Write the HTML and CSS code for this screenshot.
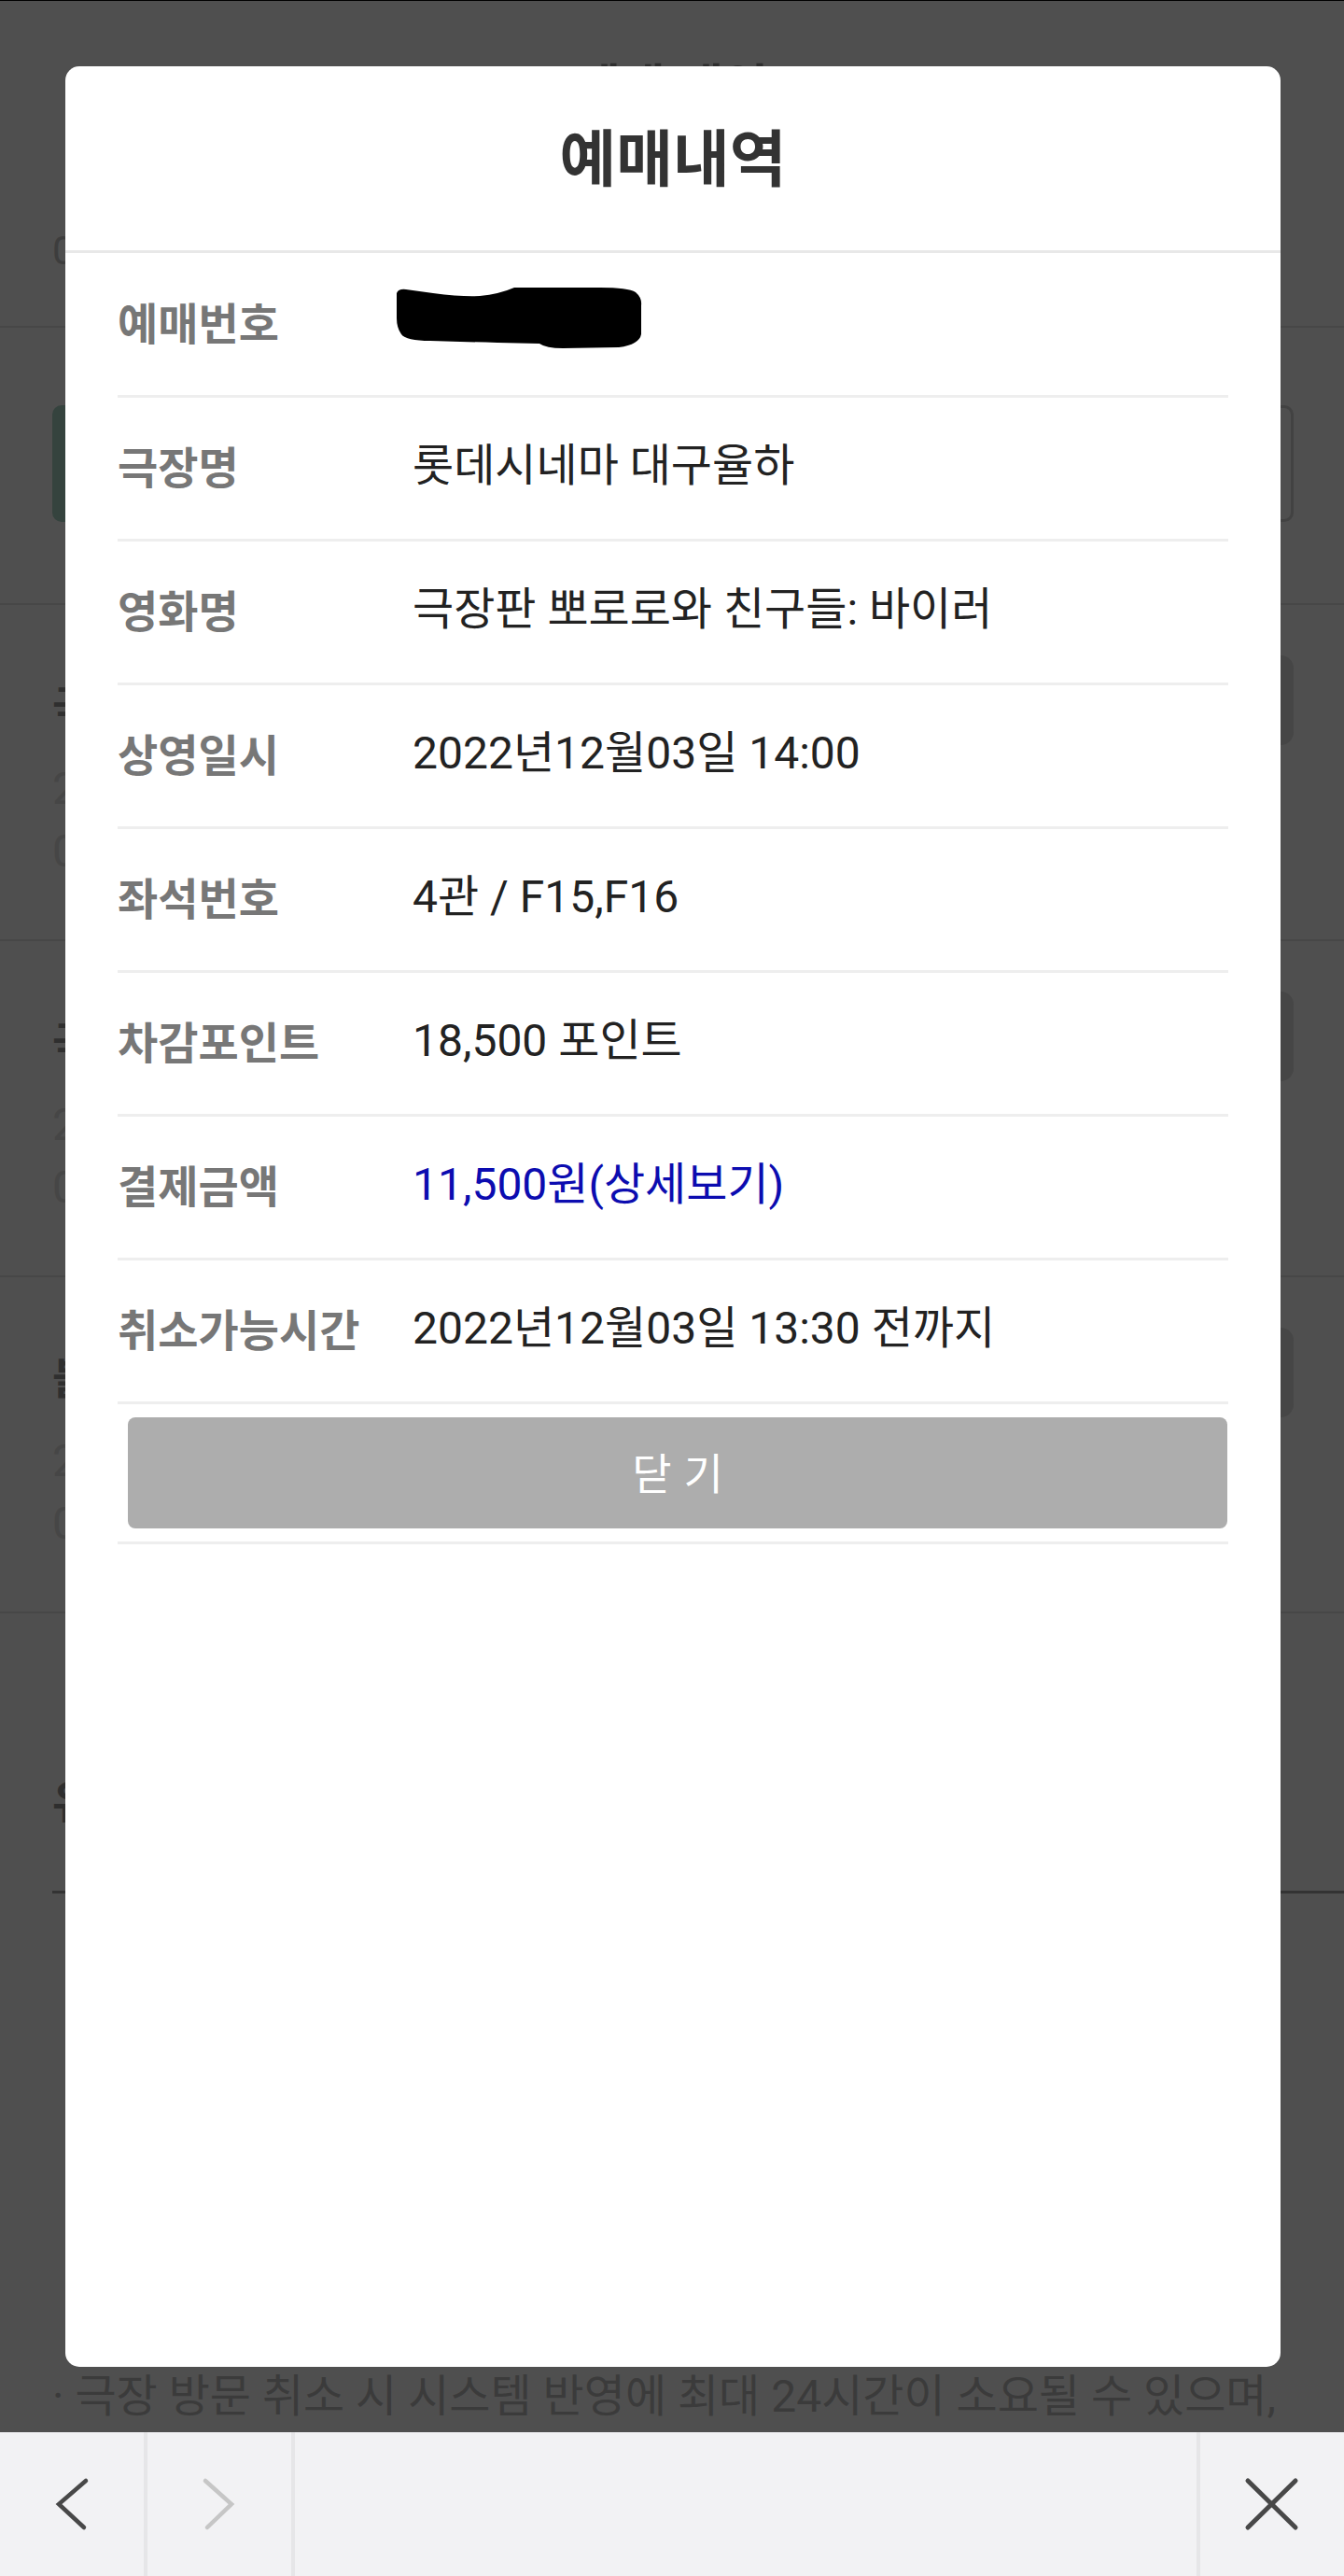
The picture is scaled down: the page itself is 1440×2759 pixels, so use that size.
FILE: index.html
```html
<!DOCTYPE html>
<html lang="ko">
<head>
<meta charset="utf-8">
<title>예매내역</title>
<link rel="stylesheet" href="styles.css">
</head>
<body>
<div class="screen">
  <div class="page">
    <div class="topline"></div>
    <div class="page-head">
      <div class="page-title">예매 내역</div>
      <div class="tabs">0</div>
    </div>
    <div class="seg">
      <div class="seg-on"></div>
      <div class="seg-off"></div>
    </div>
    <ul class="list">
      <li class="item">
        <div class="item-text">
          <div class="item-title">극장판 뽀로로와 친구들</div>
          <div class="item-line">2022.12.03 (토) 14:00</div>
          <div class="item-line">0명 / 대구율하</div>
        </div>
        <div class="item-btn"></div>
      </li>
      <li class="item">
        <div class="item-text">
          <div class="item-title">극장판 뽀로로와 친구들</div>
          <div class="item-line">2022.11.26 (토) 11:20</div>
          <div class="item-line">0명 / 대구율하</div>
        </div>
        <div class="item-btn"></div>
      </li>
      <li class="item">
        <div class="item-text">
          <div class="item-title">블랙 팬서</div>
          <div class="item-line">2022.11.13 (일) 18:40</div>
          <div class="item-line">0명 / 대구율하</div>
        </div>
        <div class="item-btn"></div>
      </li>
    </ul>
    <div class="notice">
      <div class="notice-head">유의사항</div>
      <p class="notice-text">· 극장 방문 취소 시 시스템 반영에 최대 24시간이 소요될 수 있으며,</p>
    </div>

    <div class="modal">
      <div class="modal-head"><h2 class="modal-title">예매내역</h2></div>
      <div class="rows">
        <div class="row">
          <div class="label">예매번호</div>
          <div class="value">
            <svg class="redact" width="264" height="70" viewBox="0 0 264 70"><path d="M0 9 Q2 4 10 5 L39 9 Q70 13 89 12 Q110 10 126 3 L218 3 Q248 3 256 8 Q263 14 262 22 L262 53 Q260 64 238 67 L178 68 Q160 68 153 63 L108 62 Q70 61 36 60 Q10 60 5 53 Q0 46 0 36 Z" fill="#000"/></svg>
          </div>
        </div>
        <div class="row">
          <div class="label">극장명</div>
          <div class="value">롯데시네마 대구율하</div>
        </div>
        <div class="row">
          <div class="label">영화명</div>
          <div class="value">극장판 뽀로로와 친구들: 바이러</div>
        </div>
        <div class="row">
          <div class="label">상영일시</div>
          <div class="value">2022년12월03일 14:00</div>
        </div>
        <div class="row">
          <div class="label">좌석번호</div>
          <div class="value">4관 / F15,F16</div>
        </div>
        <div class="row">
          <div class="label">차감포인트</div>
          <div class="value">18,500 포인트</div>
        </div>
        <div class="row">
          <div class="label">결제금액</div>
          <div class="value link">11,500원(상세보기)</div>
        </div>
        <div class="row">
          <div class="label">취소가능시간</div>
          <div class="value">2022년12월03일 13:30 전까지</div>
        </div>
        <div class="actions">
          <div class="close-btn">닫 기</div>
        </div>
      </div>
    </div>
  </div>

  <nav class="toolbar">
    <div class="tb tb-back">
      <svg width="154" height="154" viewBox="0 0 154 154"><path d="M92 52 L63 77 L90 102" fill="none" stroke="#484848" stroke-width="4.5" stroke-linecap="round"/></svg>
    </div>
    <div class="tb tb-fwd">
      <svg width="154" height="154" viewBox="0 0 154 154"><path d="M62 52 L90 77 L64 102" fill="none" stroke="#c6c6c6" stroke-width="4.5" stroke-linecap="round"/></svg>
    </div>
    <div class="tb-spacer"></div>
    <div class="tb tb-close">
      <svg width="154" height="154" viewBox="0 0 154 154"><path d="M51 52 L102 102 M102 52 L51 102" fill="none" stroke="#484848" stroke-width="5" stroke-linecap="round"/></svg>
    </div>
  </nav>
</div>
</body>
</html>
```

FILE: styles.css
```css
* {
  box-sizing: border-box;
  margin: 0;
  padding: 0;
}

html, body {
  margin: 0;
  background: #4f4f4f;
}

body {
  width: 1440px;
  height: 2759px;
  overflow: hidden;
  font-family: "Roboto", "Noto Sans CJK KR", sans-serif;
}

.screen {
  display: flex;
  flex-direction: column;
  height: 2759px;
}

/* underlying page, dimmed by the overlay */
.page {
  position: relative;
  flex: none;
  height: 2605px;
  background: #4f4f4f;
  overflow: hidden;
}

.topline {
  height: 1px;
  background: #000;
}

.page-head {
  height: 350px;
  padding-top: 59px;
  border-bottom: 2px solid #474747;
}

.page-title {
  font: 700 52px/60px "Noto Sans CJK KR", sans-serif;
  color: #2e2e2e;
  text-align: center;
}

.tabs {
  margin-top: 124px;
  padding-left: 56px;
  font: 400 42px/50px "Roboto", "Noto Sans CJK KR", sans-serif;
  color: #3d3d3d;
}

.seg {
  display: flex;
  height: 125px;
  margin-top: 83px;
  padding: 0 54px 0 56px;
}

.seg-on {
  flex: 1;
  background: #35433e;
  border-radius: 10px 0 0 10px;
}

.seg-off {
  flex: 1;
  border: 3px solid #424242;
  border-radius: 0 10px 10px 0;
}

.list {
  list-style: none;
  margin-top: 87px;
  border-top: 2px solid #474747;
}

.item {
  display: flex;
  height: 360px;
  padding: 70px 54px 0 56px;
  border-bottom: 2px solid #474747;
}

.item-text {
  flex: 1;
  white-space: nowrap;
  overflow: hidden;
}

.item-title {
  font: 700 46px/70px "Noto Sans CJK KR", sans-serif;
  color: #2f2f2f;
  margin-bottom: 23px;
}

.item-line {
  font: 400 48px/67px "Roboto", "Noto Sans CJK KR", sans-serif;
  color: #464646;
}

.item-btn {
  flex: none;
  width: 200px;
  height: 96px;
  margin-top: -16px;
  border-radius: 14px;
  background: #464646;
}

.notice {
  margin-top: 168px;
}

.notice-head {
  margin-left: 56px;
  padding-bottom: 69px;
  border-bottom: 3px solid #333;
  font: 700 48px/60px "Noto Sans CJK KR", sans-serif;
  color: #2e2e2e;
}

.notice-text {
  margin-top: 509px;
  padding-left: 56px;
  font: 400 48px/60px "Roboto", "Noto Sans CJK KR", sans-serif;
  color: #3b3b3b;
  white-space: nowrap;
}

/* modal */
.modal {
  position: absolute;
  left: 70px;
  top: 71px;
  width: 1302px;
  height: 2464px;
  background: #fff;
  border-radius: 15px;
}

.modal-head {
  display: flex;
  align-items: center;
  justify-content: center;
  height: 200px;
  padding-bottom: 8px;
  border-bottom: 3px solid #e8e8e8;
}

.modal-title {
  font: 700 66px/1.2 "Noto Sans CJK KR", sans-serif;
  color: #333;
}

.rows {
  margin: 0 56px;
}

.row {
  display: flex;
  align-items: center;
  height: 154px;
  padding-bottom: 6px;
  border-bottom: 3px solid #eeeeee;
}

.row:first-child {
  height: 155px;
}

.label {
  flex: none;
  width: 316px;
  font: 700 47px/1.2 "Noto Sans CJK KR", sans-serif;
  color: #777;
}

.value {
  display: flex;
  align-items: center;
  font: 400 48px/1.2 "Roboto", "Noto Sans CJK KR", sans-serif;
  color: #222;
  white-space: nowrap;
}

.value.link {
  color: #0c0cb0;
}

.redact {
  display: block;
  margin-left: -17px;
  margin-bottom: 8px;
}

.actions {
  padding: 14px 1px 14px 11px;
  border-bottom: 3px solid #eeeeee;
}

.close-btn {
  display: flex;
  align-items: center;
  justify-content: center;
  height: 119px;
  padding-bottom: 5px;
  border-radius: 8px;
  background: #adadad;
  color: #fff;
  font: 400 46px/1 "Noto Sans CJK KR", sans-serif;
}

/* browser toolbar */
.toolbar {
  display: flex;
  flex: none;
  height: 154px;
  background: #f2f2f4;
}

.tb {
  display: flex;
  flex: none;
  width: 158px;
  align-items: center;
  justify-content: center;
}

.tb-back,
.tb-fwd {
  border-right: 4px solid #e6e6e8;
}

.tb-close {
  border-left: 4px solid #e6e6e8;
}

.tb svg {
  display: block;
}

.tb-spacer {
  flex: 1;
}
```
